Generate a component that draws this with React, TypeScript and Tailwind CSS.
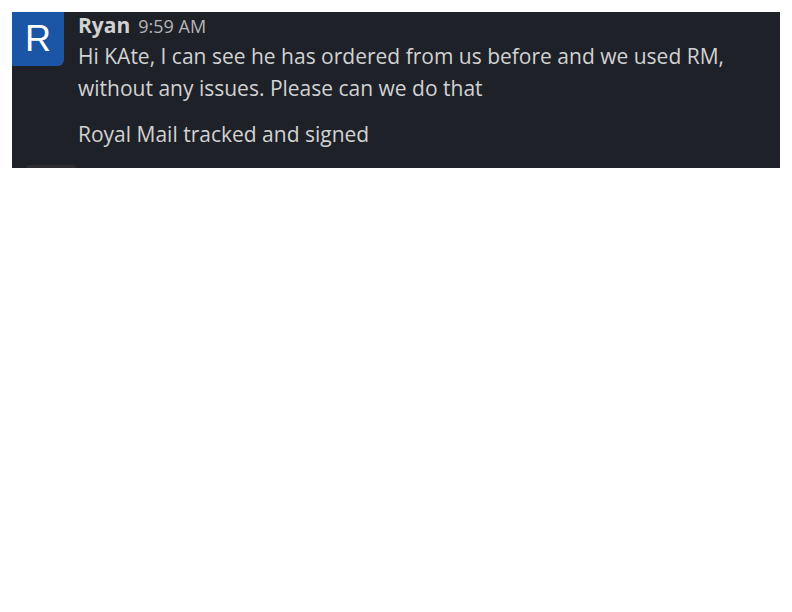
import React from 'react';

const App: React.FC = () => {
  return (
    <div className="w-[792px] h-[612px] bg-white pt-[12px] px-[12px]" style={{ fontFamily: '"Open Sans", "Noto Sans", sans-serif' }}>
      <div className="relative h-[156px] bg-[#1f2128] flex overflow-hidden">
        <div className="w-[52px] h-[54px] shrink-0 bg-[#1b56a6] rounded-br-[6px] flex items-center justify-center text-white text-[36px] leading-none" style={{ fontFamily: '"Liberation Sans", Arial, sans-serif' }}>
          R
        </div>
        <div className="ml-[14px] flex flex-col text-[#d1d2d3]">
          <div className="flex items-baseline gap-[8px]">
            <span className="font-bold text-[21px] leading-[26px] text-[#d1d2d3]">Ryan</span>
            <span className="text-[18px] leading-[26px] text-[#b4b5b7]">9:59 AM</span>
          </div>
          <p className="text-[21px] leading-[32px] mt-[1px] pr-[40px]">
            Hi KAte, I can see he has ordered from us before and we used RM, without any issues. Please can we do that
          </p>
          <p className="text-[21px] leading-[32px] mt-[14px]">Royal Mail tracked and signed</p>
        </div>
        <div className="absolute left-[14px] bottom-0 w-[50px] h-[3px] bg-[#2e2e30] rounded-t-[4px]" />
      </div>
    </div>
  );
};

export default App;
